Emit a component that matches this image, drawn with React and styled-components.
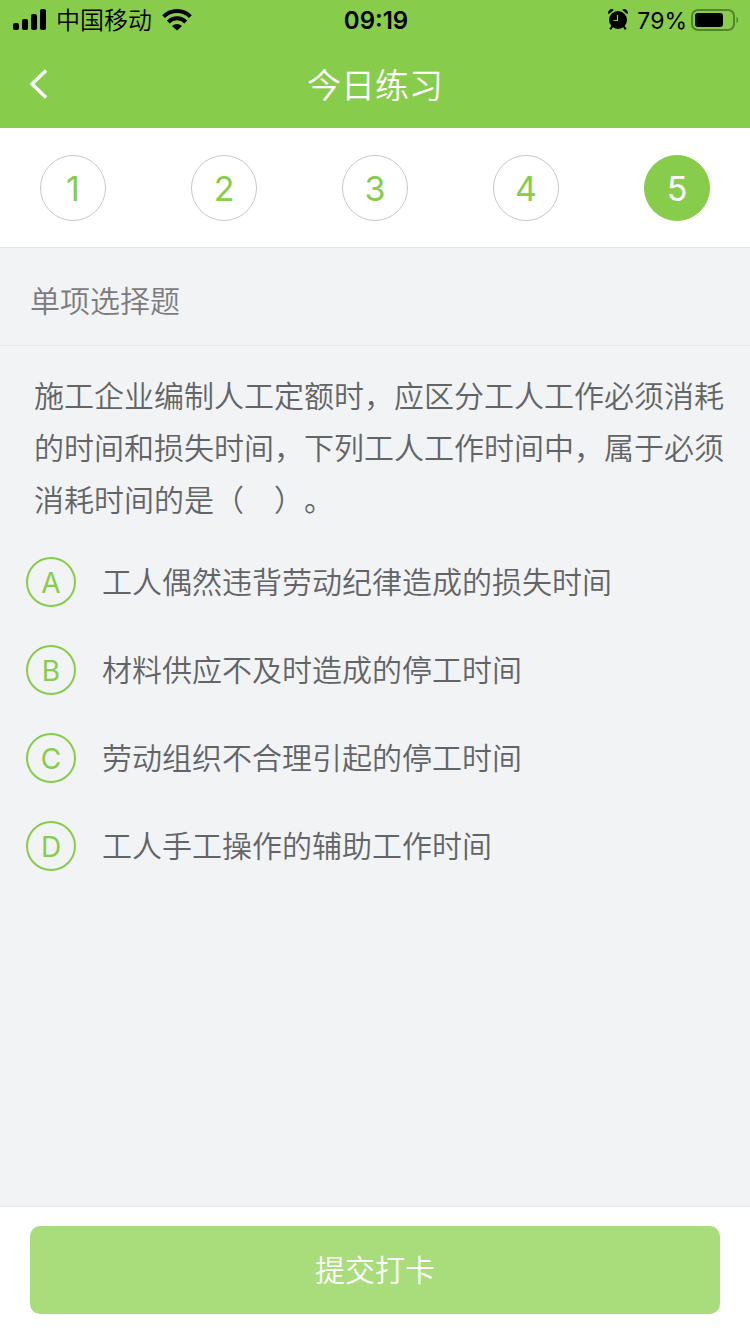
import React, { useState } from "react";
import styled, { createGlobalStyle } from "styled-components";

const GlobalStyle = createGlobalStyle`
  * {
    box-sizing: border-box;
  }

  body {
    margin: 0;
    background: #f2f3f5;
    font-family: Inter, "Noto Sans CJK SC", sans-serif;
    font-weight: 350;
    text-spacing-trim: space-all;
  }

  button {
    padding: 0;
    border: none;
    font: inherit;
    cursor: pointer;
  }
`;

const StyledPage = styled.div`
  display: flex;
  flex-direction: column;
  min-height: 100vh;
`;

const StyledHeader = styled.header`
  background: #87cc4b;
`;

const StyledStatusBar = styled.div`
  display: grid;
  grid-template-columns: 1fr auto 1fr;
  align-items: center;
  height: 40px;
  padding: 0 11px 0 13px;
  color: #000000;
  font-size: 24px;
  line-height: 42px;

  svg {
    margin-bottom: 2px;
  }
`;

const StyledCarrier = styled.div`
  display: flex;
  align-items: center;
  gap: 10px;
`;

const StyledTime = styled.time`
  font-weight: 600;
`;

const StyledBattery = styled.div`
  display: flex;
  align-items: center;
  justify-content: flex-end;
  gap: 4px;
`;

const StyledPercent = styled.span`
  margin-left: 5px;
  font-size: 23px;
  font-weight: 400;
`;

const StyledNav = styled.div`
  display: grid;
  grid-template-columns: 80px 1fr 80px;
  align-items: center;
  height: 88px;
`;

const StyledBack = styled.button`
  display: flex;
  align-items: center;
  height: 88px;
  padding-left: 28px;
  background: transparent;
`;

const StyledTitle = styled.h1`
  margin: 0;
  padding-top: 4px;
  color: #ffffff;
  font-size: 34px;
  font-weight: 350;
  line-height: 48px;
  text-align: center;
`;

const StyledSteps = styled.nav`
  display: flex;
  justify-content: space-between;
  padding: 27px 40px 26px;
  background: #ffffff;
  border-bottom: 1px solid #e2e3e5;
`;

const StyledStep = styled.button`
  width: 66px;
  height: 66px;
  border-radius: 50%;
  border: 1px solid ${(props) => (props.$active ? "#87cc4b" : "#c8c8c8")};
  background: ${(props) => (props.$active ? "#87cc4b" : "#ffffff")};
  color: ${(props) => (props.$active ? "#ffffff" : "#87cc4b")};
  && {
    font-size: 34px;
    font-weight: 400;
  }
`;

const StyledMain = styled.main`
  flex: 1;
`;

const StyledType = styled.h2`
  margin: 0;
  padding: 29px 30px 19px;
  border-bottom: 1px solid #e6e7e9;
  color: #7c7c7e;
  font-size: 30px;
  font-weight: 350;
  line-height: 49px;
`;

const StyledQuestion = styled.fieldset`
  margin: 0;
  padding: 0;
  border: none;
  color: #636466;
  font-size: 30px;
`;

const StyledText = styled.legend`
  padding: 24px 24px 0 34px;
  line-height: 52px;
`;

const StyledOptions = styled.div`
  display: flex;
  flex-direction: column;
  gap: 38px;
  padding: 31px 26px;
`;

const StyledOption = styled.label`
  display: flex;
  align-items: center;
  gap: 26px;
  line-height: 50px;
  cursor: pointer;
`;

const StyledMark = styled.span`
  display: grid;
  flex: none;
  place-items: center;
  width: 50px;
  height: 50px;
  border: 2px solid #87cc4b;
  border-radius: 50%;
  color: #87cc4b;
  font-size: 28px;
  font-weight: 400;
  line-height: 48px;
`;

const StyledRadio = styled.input`
  appearance: none;
  position: absolute;
  margin: 0;

  &:checked + ${StyledMark} {
    background: #87cc4b;
    color: #ffffff;
  }
`;

const StyledFooter = styled.footer`
  padding: 19px 30px 20px;
  background: #ffffff;
  border-top: 1px solid #e6e7e9;
`;

const StyledSubmit = styled.button`
  width: 100%;
  height: 88px;
  padding-bottom: 4px;
  border-radius: 10px;
  background: #a9dc7a;
  color: #ffffff;
  && {
    font-size: 30px;
  }
`;

const SignalIcon = () => (
  <svg width="33" height="22" viewBox="0 0 33 22" aria-hidden="true">
    <rect x="0" y="14" width="6" height="7" rx="2" />
    <rect x="9" y="10" width="6" height="11" rx="2" />
    <rect x="18" y="5" width="6" height="16" rx="2" />
    <rect x="27" y="0" width="6" height="21" rx="2" />
  </svg>
);

const WifiIcon = () => (
  <svg width="30" height="22" viewBox="0 0 30 22" aria-hidden="true">
    <g fill="none" stroke="#000000" strokeWidth="4">
      <path d="M1.6 7.6a19 19 0 0 1 26.8 0" />
      <path d="M6.2 13a12.4 12.4 0 0 1 17.6 0" />
    </g>
    <path d="M10 17a7.2 7.2 0 0 1 10 0L15 21.5z" />
  </svg>
);

const AlarmIcon = () => (
  <svg width="20" height="22" viewBox="0 0 20 22" aria-hidden="true">
    <path d="M.6 5.2A3.4 3.4 0 0 1 5.8 1zM19.4 5.2A3.4 3.4 0 0 0 14.2 1z" />
    <circle cx="10" cy="11" r="9" />
    <path d="M4.5 17 2.2 20.4M15.5 17l2.3 3.4" stroke="#000000" strokeWidth="2" />
    <path
      d="M9.5 6v5.5H5.5"
      fill="none"
      stroke="#87cc4b"
      strokeWidth="1.2"
    />
  </svg>
);

const BatteryIcon = () => (
  <svg width="48" height="24" viewBox="0 0 48 24" aria-hidden="true">
    <rect
      x="1"
      y="2"
      width="42"
      height="20"
      rx="6"
      fill="none"
      stroke="#568330"
      strokeWidth="2"
    />
    <rect x="4" y="5" width="28" height="14" rx="3" />
    <path d="M45.5 8.5q3.4 3.5 0 7z" fill="#568330" />
  </svg>
);

const BackIcon = () => (
  <svg width="22" height="32" viewBox="0 0 22 32" aria-hidden="true">
    <path
      d="M18 2.5 4 16l14 13.5"
      fill="none"
      stroke="#ffffff"
      strokeWidth="3.4"
    />
  </svg>
);

const steps = [1, 2, 3, 4, 5];

const options = [
  { key: "A", text: "工人偶然违背劳动纪律造成的损失时间" },
  { key: "B", text: "材料供应不及时造成的停工时间" },
  { key: "C", text: "劳动组织不合理引起的停工时间" },
  { key: "D", text: "工人手工操作的辅助工作时间" },
];

const App = () => {
  const [step, setStep] = useState(5);
  const [answer, setAnswer] = useState("");

  return (
    <StyledPage lang="zh-CN">
      <GlobalStyle />
      <StyledHeader>
        <StyledStatusBar>
          <StyledCarrier>
            <SignalIcon />
            <span>中国移动</span>
            <WifiIcon />
          </StyledCarrier>
          <StyledTime>09:19</StyledTime>
          <StyledBattery>
            <AlarmIcon />
            <StyledPercent>79%</StyledPercent>
            <BatteryIcon />
          </StyledBattery>
        </StyledStatusBar>
        <StyledNav>
          <StyledBack type="button" aria-label="返回">
            <BackIcon />
          </StyledBack>
          <StyledTitle>今日练习</StyledTitle>
        </StyledNav>
      </StyledHeader>

      <StyledSteps>
        {steps.map((n) => (
          <StyledStep
            key={n}
            type="button"
            $active={n === step}
            onClick={() => setStep(n)}
          >
            {n}
          </StyledStep>
        ))}
      </StyledSteps>

      <StyledMain>
        <StyledType>单项选择题</StyledType>
        <StyledQuestion>
          <StyledText>
            施工企业编制人工定额时，应区分工人工作必须消耗的时间和损失时间，下列工人工作时间中，属于必须消耗时间的是（　）。
          </StyledText>
          <StyledOptions>
            {options.map((option) => (
              <StyledOption key={option.key}>
                <StyledRadio
                  type="radio"
                  name="answer"
                  value={option.key}
                  checked={answer === option.key}
                  onChange={() => setAnswer(option.key)}
                />
                <StyledMark>{option.key}</StyledMark>
                <span>{option.text}</span>
              </StyledOption>
            ))}
          </StyledOptions>
        </StyledQuestion>
      </StyledMain>

      <StyledFooter>
        <StyledSubmit type="button">提交打卡</StyledSubmit>
      </StyledFooter>
    </StyledPage>
  );
};

export default App;
